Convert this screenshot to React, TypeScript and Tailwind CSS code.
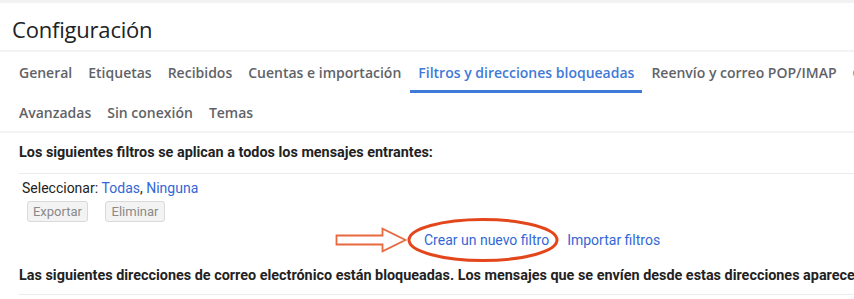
import React from 'react'

const tabsTop = ['General', 'Etiquetas', 'Recibidos', 'Cuentas e importación']
const tabsBottom = ['Avanzadas', 'Sin conexión', 'Temas']

export default function App() {
  return (
    <div className="w-[854px] h-[299px] bg-white overflow-hidden font-['Roboto',sans-serif] text-[#222]">
      <div className="h-[3px] bg-[#f2f2f2]" />

      {/* Title */}
      <div className="h-[47px] flex items-center pl-[12px] pt-[5px]">
        <h1 className="font-['Open_Sans',sans-serif] text-[22px] text-[#202124] tracking-[-0.2px]">Configuración</h1>
      </div>
      <div className="h-[2px] bg-[#f3f3f3]" />

      {/* Tabs */}
      <div className="font-['Open_Sans',sans-serif] text-[14px] font-semibold text-[#5f6368] pl-[11px] whitespace-nowrap">
        <div className="h-[41px] flex items-stretch">
          {tabsTop.map((t) => (
            <div key={t} className="px-[8px] flex items-center pt-[2px] border-b-[3px] border-transparent">
              {t}
            </div>
          ))}
          <div className="px-[8px] ml-[1px] flex items-center pt-[2px] border-b-[3px] border-[#3f7ad8] text-[#3f7ad8]">
            Filtros y direcciones bloqueadas
          </div>
          <div className="px-[8px] ml-[1px] flex items-center pt-[2px] border-b-[3px] border-transparent">
            Reenvío y correo POP/IMAP
          </div>
          <div className="px-[8px] flex items-center pt-[2px] border-b-[3px] border-transparent">
            Complementos
          </div>
        </div>
        <div className="h-[38px] flex items-center">
          {tabsBottom.map((t) => (
            <div key={t} className="px-[8px]">
              {t}
            </div>
          ))}
        </div>
      </div>
      <div className="h-[2px] bg-[#f3f3f3]" />

      {/* Filters */}
      <div className="pl-[19px] text-[14px] whitespace-nowrap">
        <div className="h-[40px] flex items-center font-bold text-[14.4px] text-[#222]">
          Los siguientes filtros se aplican a todos los mensajes entrantes:
        </div>
        <div className="h-px bg-[#ebebeb]" />
        <div className="h-[27px] flex items-center pl-[3px] pt-[1px]">
          Seleccionar:&nbsp;<span className="text-[#3367d6]">Todas</span>,&nbsp;<span className="text-[#3367d6]">Ninguna</span>
        </div>
        <div className="flex gap-[17px] pl-[8px] text-[13px] text-[#8a8a8a]">
          <button className="h-[21px] w-[61px] rounded-[3px] border border-[#d9d9d9] bg-[#f3f3f3]">Exportar</button>
          <button className="h-[21px] w-[60px] rounded-[3px] border border-[#d9d9d9] bg-[#f3f3f3]">Eliminar</button>
        </div>

        <div className="h-[36px] flex items-center pl-[316px]">
          <svg width="72" height="26" viewBox="0 0 72 26">
            <path
              d="M1.5 8.5 H47.5 V1.8 L70.5 13 L47.5 24.2 V17.5 H1.5 Z"
              fill="none"
              stroke="#e9693f"
              strokeWidth="1.8"
              strokeLinejoin="miter"
            />
          </svg>
          <div className="relative ml-[17px]">
            <svg
              width="154"
              height="46"
              viewBox="0 0 154 46"
              className="absolute left-[-18px] top-[-13px]"
            >
              <ellipse cx="77" cy="23" rx="74" ry="20.5" fill="none" stroke="#e4461b" strokeWidth="3" />
            </svg>
            <span className="relative text-[#3367d6]">Crear un nuevo filtro</span>
          </div>
          <span className="ml-[18px] text-[#3367d6]">Importar filtros</span>
        </div>

        <div className="h-[36px] flex items-center font-bold text-[14.4px] text-[#222]">
          Las siguientes direcciones de correo electrónico están bloqueadas. Los mensajes que se envíen desde estas direcciones aparecerán en la carpeta Spam:
        </div>
        <div className="h-px bg-[#ebebeb]" />
      </div>
    </div>
  )
}
